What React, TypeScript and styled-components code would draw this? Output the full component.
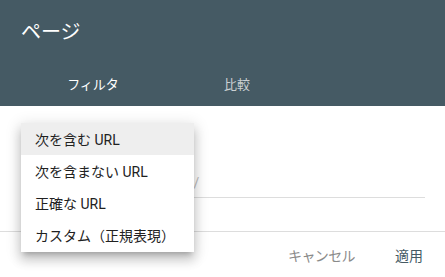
import React from "react";
import styled, { createGlobalStyle } from "styled-components";

const Global = createGlobalStyle`
  html, body { margin: 0; padding: 0; background: #ffffff; }
  body { font-family: Roboto, "Noto Sans CJK JP", sans-serif; overflow: hidden; }
  * { box-sizing: border-box; }
`;

const Dialog = styled.div`
  width: 445px;
  height: 277px;
  display: flex;
  flex-direction: column;
  background: #ffffff;
`;

const Header = styled.header`
  background: #455a64;
  height: 106px;
  display: flex;
  flex-direction: column;
  padding: 0 0 0 21px;
`;

const Title = styled.h1`
  margin: 0;
  height: 60px;
  display: flex;
  align-items: center;
  font-size: 20px;
  font-weight: 400;
  color: #ffffff;
`;

const TabRow = styled.div`
  display: flex;
  height: 46px;
`;

const Tab = styled.div<{ $active?: boolean }>`
  position: relative;
  width: 144px;
  display: flex;
  align-items: center;
  justify-content: center;
  font-size: 13px;
  font-weight: 400;
  color: ${(p) => (p.$active ? "#ffffff" : "rgba(255,255,255,0.72)")};
`;

const Indicator = styled.span`
  position: absolute;
  left: 0;
  right: 0;
  bottom: -2px;
  height: 2px;
  background: #ffffff;
  z-index: 3;
`;

const Body = styled.div`
  position: relative;
  height: 125px;
  padding: 0 20px 33px 21px;
  display: flex;
  flex-direction: column;
  justify-content: flex-end;
`;

const Field = styled.input`
  height: 30px;
  width: 100%;
  border: 0;
  border-bottom: 1px solid #dddddd;
  outline: none;
  padding: 0 0 0 4px;
  background: transparent;
  font-family: Roboto, "Noto Sans CJK JP", sans-serif;
  font-size: 14px;
  color: #212121;
  &::placeholder {
    color: #bdbdbd;
  }
`;

const Menu = styled.ul`
  position: absolute;
  left: 21px;
  top: 17px;
  width: 173px;
  margin: 0;
  padding: 0 0 1px;
  list-style: none;
  background: #ffffff;
  z-index: 2;
  box-shadow: 0 5px 5px -3px rgba(0, 0, 0, 0.2), 0 8px 10px 1px rgba(0, 0, 0, 0.14),
    0 3px 14px 2px rgba(0, 0, 0, 0.12);
`;

const MenuItem = styled.li<{ $selected?: boolean }>`
  height: 32px;
  display: flex;
  align-items: center;
  padding-left: 14px;
  font-size: 14px;
  color: #212121;
  background: ${(p) => (p.$selected ? "#eeeeee" : "transparent")};
  white-space: nowrap;
`;

const Footer = styled.footer`
  border-top: 1px solid #dddddd;
  flex: 1;
  display: flex;
  align-items: center;
  justify-content: flex-end;
  gap: 24px;
  padding: 0 14px 0 0;
`;

const Button = styled.button<{ $primary?: boolean }>`
  border: 0;
  background: transparent;
  padding: 0 8px;
  height: 36px;
  font-family: Roboto, "Noto Sans CJK JP", sans-serif;
  font-size: 14px;
  font-weight: 400;
  letter-spacing: ${(p) => (p.$primary ? "0" : "-0.6px")};
  color: ${(p) => (p.$primary ? "#455a64" : "#8a8a8a")};
`;

const items = ["次を含む URL", "次を含まない URL", "正確な URL", "カスタム（正規表現）"];

export default function App() {
  return (
    <>
      <Global />
      <Dialog>
        <Header>
          <Title>ページ</Title>
          <TabRow>
            <Tab $active>
              フィルタ
              <Indicator />
            </Tab>
            <Tab>比較</Tab>
          </TabRow>
        </Header>
        <Body>
          <Field placeholder="例: https://www.example.jp/" />
          <Menu>
            {items.map((t, i) => (
              <MenuItem key={t} $selected={i === 0}>
                {t}
              </MenuItem>
            ))}
          </Menu>
        </Body>
        <Footer>
          <Button>キャンセル</Button>
          <Button $primary>適用</Button>
        </Footer>
      </Dialog>
    </>
  );
}
